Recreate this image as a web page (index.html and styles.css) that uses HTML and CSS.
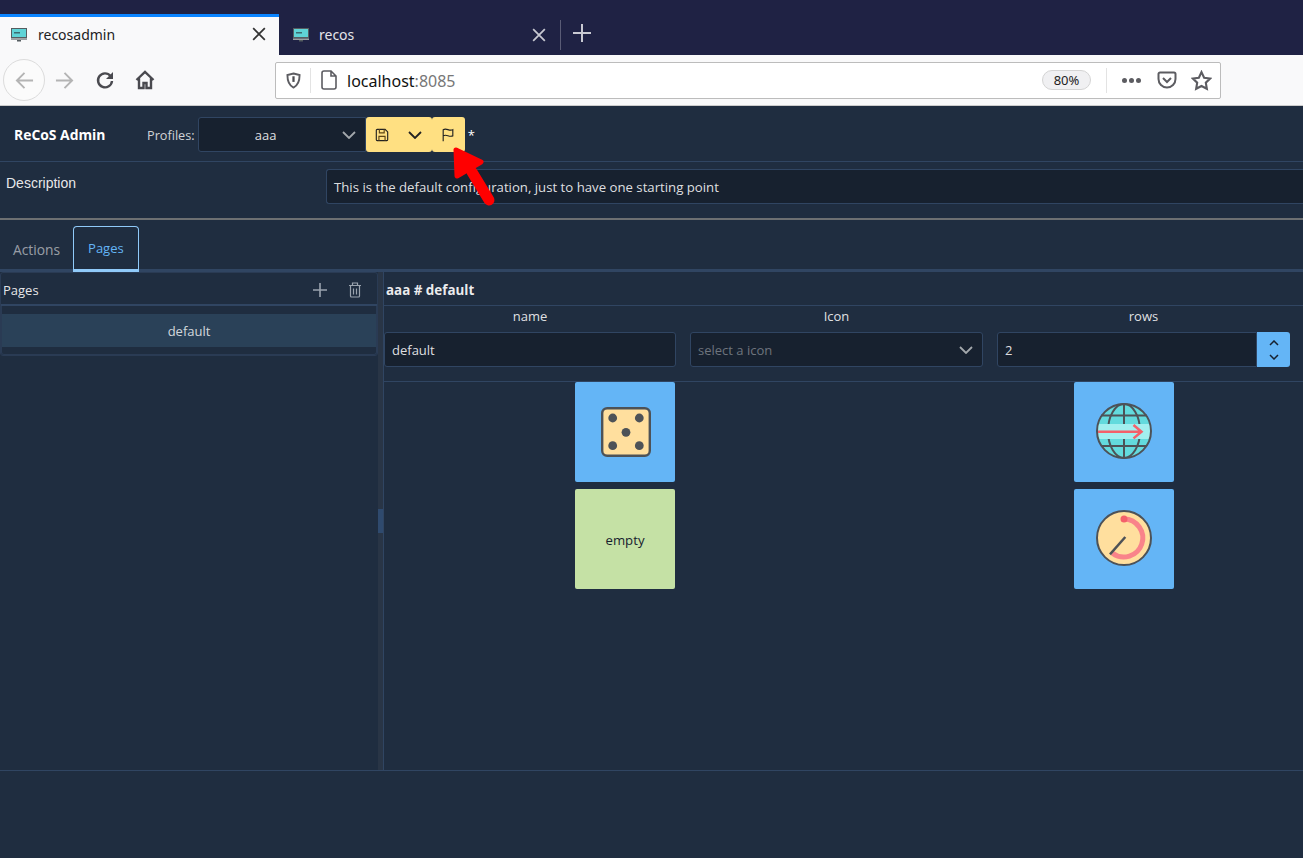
FILE: index.html
```html
<!DOCTYPE html>
<html lang="en">
  <head>
    <meta charset="utf-8">
    <title>recosadmin</title>
    <link rel="stylesheet" href="styles.css">
  </head>
  <body>
    <div class="tabstrip">
      <div class="tab active">
        <svg class="favicon" viewBox="0 0 16 14"><rect x="0" y="0" width="16" height="10.500" fill="#555d60"/><rect x="1" y="1" width="14" height="8" fill="#5fd3d6"/><rect x="3" y="4" width="6" height="1.500" fill="#3b6b70"/><rect x="0" y="10.500" width="16" height="1.500" fill="#9aa0a2"/><rect x="6" y="12" width="4" height="1.500" fill="#555d60"/></svg>
        <span class="tab-title">recosadmin</span>
        <svg class="tab-close" viewBox="0 0 12 12"><path d="M1 1l10 10M11 1L1 11"/></svg>
      </div>
      <div class="tab">
        <svg class="favicon" viewBox="0 0 16 14"><rect x="0" y="0" width="16" height="10.500" fill="#555d60"/><rect x="1" y="1" width="14" height="8" fill="#5fd3d6"/><rect x="3" y="4" width="6" height="1.500" fill="#3b6b70"/><rect x="0" y="10.500" width="16" height="1.500" fill="#9aa0a2"/><rect x="6" y="12" width="4" height="1.500" fill="#555d60"/></svg>
        <span class="tab-title">recos</span>
        <svg class="tab-close" viewBox="0 0 12 12"><path d="M1 1l10 10M11 1L1 11"/></svg>
      </div>
      <div class="tab-sep"></div>
      <svg class="tab-new" viewBox="0 0 18 18"><path d="M9 0v18M0 9h18"/></svg>
    </div>

    <div class="toolbar">
      <div class="nav">
        <div class="nav-back">
          <svg viewBox="0 0 22 20"><path d="M20 10H3M11 2l-8 8 8 8"/></svg>
        </div>
        <svg class="nav-fwd" viewBox="0 0 22 20"><path d="M2 10h17M11 2l8 8-8 8"/></svg>
        <svg class="nav-icon reload" viewBox="0 0 20 20"><path d="M15.500 6A7 7 0 1 0 17 11"/><path class="solid" d="M18 2v7h-7z"/></svg>
        <svg class="nav-icon home" viewBox="0 0 20 20"><path d="M1.500 10L10 2l8.500 8M4 8v10h4.500v-5h3v5H16V8"/></svg>
      </div>
      <div class="urlbar">
        <svg class="shield" viewBox="0 0 16 18"><path d="M8 1.500l6.500 1.700c0 6-1 10.800-6.500 13.300C2.500 14 1.500 9.200 1.500 3.200z"/><path class="solid" d="M6.800 4.500h2.400v6H6.800z"/></svg>
        <div class="url-sep"></div>
        <svg class="pageicon" viewBox="0 0 16 20"><path d="M3 1h7l5 5v11a2 2 0 0 1-2 2H3a2 2 0 0 1-2-2V3a2 2 0 0 1 2-2zM10 1v5h5"/></svg>
        <span class="url-host">localhost<span class="url-port">:8085</span></span>
        <span class="zoom-pill">80%</span>
        <div class="url-sep right"></div>
        <span class="dots"><i></i><i></i><i></i></span>
        <svg class="pocket" viewBox="0 0 20 18"><path d="M3 1.500h14a1.500 1.500 0 0 1 1.500 1.500v5a8.500 8.500 0 0 1-17 0V3A1.500 1.500 0 0 1 3 1.500z"/><path d="M6 7l4 4 4-4"/></svg>
        <svg class="star" viewBox="0 0 20 20"><path d="M10 2l2.500 5.300 5.700.8-4.100 4 1 5.800L10 15.200l-5.100 2.700 1-5.800-4.100-4 5.700-.8z"/></svg>
      </div>
    </div>

    <div class="app">
      <header class="topbar">
        <span class="brand">ReCoS Admin</span>
        <span class="profiles-label">Profiles:</span>
        <div class="select profile-select">
          <span class="select-value">aaa</span>
          <svg class="chevron" viewBox="0 0 14 8"><path d="M1 1l6 6 6-6"/></svg>
        </div>
        <div class="btn-group">
          <button class="btn">
            <svg class="btn-icon save" viewBox="0 0 16 16"><path d="M2.500 1.500h9l3 3v9a1 1 0 0 1-1 1h-11a1 1 0 0 1-1-1v-11a1 1 0 0 1 1-1z"/><path class="orange" d="M5 1.500v4h5.500v-4M4.500 14.500V9.500h7v5"/></svg>
          </button>
          <button class="btn">
            <svg class="btn-icon down" viewBox="0 0 14 8"><path d="M1 1l6 6 6-6"/></svg>
          </button>
          <button class="btn">
            <svg class="btn-icon flag" viewBox="0 0 16 16"><path d="M2.500 15V2c4-2.500 6.500 2 11 0v7c-4.500 2-7-2.500-11 0"/></svg>
          </button>
        </div>
        <span class="dirty">*</span>
      </header>

      <div class="description">
        <label class="desc-label">Description</label>
        <div class="input desc-input">This is the default configuration, just to have one starting point</div>
      </div>

      <nav class="tabs">
        <span class="app-tab">Actions</span>
        <span class="app-tab selected">Pages</span>
      </nav>

      <div class="split">
        <aside class="pages-panel">
          <div class="pages-box">
            <div class="pages-head">
              <span>Pages</span>
              <svg class="head-icon plus" viewBox="0 0 14 14"><path d="M7 0v14M0 7h14"/></svg>
              <svg class="head-icon trash" viewBox="0 0 14 16"><path d="M1 3.500h12M4.500 3.500V1h5v2.500M2.500 3.500v10.500a1 1 0 0 0 1 1h7a1 1 0 0 0 1-1V3.500M5.500 6.500v6M8.500 6.500v6"/></svg>
            </div>
            <div class="pages-list">
              <div class="page-item">default</div>
            </div>
          </div>
        </aside>
        <div class="gutter"><span class="gutter-handle"></span></div>
        <main class="page-detail">
          <div class="detail-title">aaa # default</div>
          <div class="form-grid">
            <div class="field">
              <div class="field-label">name</div>
              <div class="input">default</div>
            </div>
            <div class="field">
              <div class="field-label">Icon</div>
              <div class="select">
                <span class="placeholder">select a icon</span>
                <svg class="chevron" viewBox="0 0 14 8"><path d="M1 1l6 6 6-6"/></svg>
              </div>
            </div>
            <div class="field">
              <div class="field-label">rows</div>
              <div class="spinner">
                <div class="input">2</div>
                <div class="spin-btns">
                  <svg viewBox="0 0 10 6"><path d="M1 5l4-4 4 4"/></svg>
                  <svg viewBox="0 0 10 6"><path d="M1 1l4 4 4-4"/></svg>
                </div>
              </div>
            </div>
          </div>
          <div class="action-grid">
            <div class="action-cell">
              <div class="action blue">
                <svg class="dice-icon" viewBox="0 0 50 50"><rect x="1.200" y="1.200" width="47.600" height="47.600" rx="5" fill="#ffdf9e" stroke="#4d5257" stroke-width="2.400"/><circle cx="11.700" cy="11" r="4.400" fill="#4d5257"/><circle cx="38.300" cy="11" r="4.400" fill="#4d5257"/><circle cx="25" cy="25.300" r="4.400" fill="#4d5257"/><circle cx="11.700" cy="38.700" r="4.400" fill="#4d5257"/><circle cx="38.300" cy="38.700" r="4.400" fill="#4d5257"/></svg>
              </div>
            </div>
            <div class="action-cell">
              <div class="action blue">
                <svg class="action-icon" viewBox="0 0 56 56"><circle cx="28" cy="28" r="27" fill="#63dadd"/><g fill="none" stroke="#4d5257" stroke-width="2"><ellipse cx="28" cy="28" rx="16" ry="27"/><path d="M28 1v54M5 12.500h46M5 43h46"/></g><path d="M2 21h52v15H2z" fill="#a2efef"/><circle cx="28" cy="28" r="27" fill="none" stroke="#4d5257" stroke-width="2"/><path d="M2 28.700h43M37.500 22l8 6.700-8 6.700" fill="none" stroke="#f4606a" stroke-width="2.500"/></svg>
              </div>
            </div>
            <div class="action-cell">
              <div class="action green">empty</div>
            </div>
            <div class="action-cell">
              <div class="action blue">
                <svg class="action-icon" viewBox="0 0 56 56"><circle cx="28" cy="28" r="27" fill="#ffdf9e" stroke="#4d5257" stroke-width="2"/><path d="M28 9a19 19 0 1 1-11.500 34.300" fill="none" stroke="#f9838a" stroke-width="5"/><circle cx="28" cy="9" r="3.500" fill="#f4606a"/><path d="M14 44.300L29.300 27" stroke="#4d5257" stroke-width="2.500"/></svg>
              </div>
            </div>
          </div>
        </main>
      </div>
      <footer class="app-footer"></footer>
    </div>

    <svg class="red-arrow" viewBox="0 0 50 65"><path class="head" d="M6 5l25 12L7 31z"/><path class="shaft" d="M22 27l17 28"/></svg>
  </body>
</html>
```

FILE: styles.css
```css
* {
    box-sizing: border-box;
}
html, body {
    height: 100%;
}
body {
    margin: 0;
    overflow: hidden;
    background-color: #1f2d40;
    font-family: "Open Sans", "Noto Sans", sans-serif;
    font-size: 13px;
    color: rgba(255, 255, 255, .87);
}
svg {
    display: block;
    flex: none;
}

/* browser chrome */
.tabstrip {
    display: flex;
    align-items: flex-start;
    height: 55px;
    padding-top: 14px;
    background-color: #1f2244;
}
.tab {
    display: flex;
    align-items: center;
    width: 279px;
    height: 41px;
    padding: 0 11px 0 14px;
    color: #e4e4ea;
    font-size: 14px;
}
.tab.active {
    padding: 0 12px 4px 11px;
    border-top: 3px solid #0a84ff;
    background-color: #f9f9fa;
    color: #222;
}
.favicon {
    width: 16px;
    height: 14px;
    margin-right: 10px;
}
.tab.active .favicon {
    margin-top: 2px;
    margin-right: 11px;
}
.tab-title {
    flex: 1;
    font-family: "Noto Sans", sans-serif;
}
.tab-close {
    width: 14px;
    height: 14px;
    margin-right: 1px;
    fill: none;
    stroke: #333;
    stroke-width: 1.500;
}
.tab:not(.active) .tab-close {
    stroke: #c8c9d2;
}
.tab-sep {
    width: 1px;
    height: 30px;
    margin: 6px 12px 0 2px;
    background-color: #5a5c76;
}
.tab-new {
    width: 18px;
    height: 18px;
    margin-top: 10px;
    fill: none;
    stroke: #c8c9d2;
    stroke-width: 2;
}

.toolbar {
    display: flex;
    align-items: center;
    height: 51px;
    background-color: #f9f9fa;
    border-bottom: 1px solid #ccc;
}
.nav {
    display: flex;
    align-items: center;
    width: 275px;
    padding-left: 3px;
}
.nav-back {
    display: flex;
    align-items: center;
    justify-content: center;
    width: 42px;
    height: 42px;
    border: 1px solid #dcdcdc;
    border-radius: 50%;
    background-color: #fbfbfb;
}
.nav-back svg {
    width: 21px;
    height: 19px;
    fill: none;
    stroke: #b4b4b4;
    stroke-width: 2;
}
.nav-fwd {
    width: 21px;
    height: 19px;
    margin-left: 9px;
    fill: none;
    stroke: #b4b4b4;
    stroke-width: 2;
}
.nav-icon {
    width: 20px;
    height: 20px;
    fill: none;
    stroke: #4a4a4f;
    stroke-width: 2.400;
}
.reload {
    margin-left: 20px;
}
.home {
    margin-left: 20px;
}
.solid {
    fill: #4a4a4f;
    stroke: none;
}
.urlbar {
    display: flex;
    align-items: center;
    width: 946px;
    height: 37px;
    padding: 0 8px 0 10px;
    background-color: #fff;
    border: 1px solid #bcbcbc;
    border-radius: 2px;
}
.shield {
    width: 15px;
    height: 17px;
    fill: none;
    stroke: #5c5c61;
    stroke-width: 2;
}
.url-sep {
    width: 1px;
    height: 25px;
    margin: 0 10px 0 9px;
    background-color: #e3e3e3;
}
.pageicon {
    width: 16px;
    height: 20px;
    margin-right: 10px;
    fill: none;
    stroke: #5c5c61;
    stroke-width: 1.600;
}
.url-host {
    flex: 1;
    padding-top: 2px;
    font-family: "Noto Sans", sans-serif;
    font-size: 16px;
    color: #111;
}
.url-port {
    color: #777;
}
.zoom-pill {
    width: 49px;
    height: 20px;
    border: 1px solid #d4d4d4;
    border-radius: 10px;
    background-color: #f0f0f2;
    color: #222;
    text-align: center;
    line-height: 19px;
    font-size: 13px;
    font-family: "Noto Sans", sans-serif;
}
.url-sep.right {
    margin: 0 15px 0 15px;
}
.dots {
    display: flex;
    gap: 2px;
    width: 20px;
}
.dots i {
    width: 5px;
    height: 5px;
    border-radius: 50%;
    background-color: #5c5c61;
}
.pocket {
    width: 20px;
    height: 18px;
    margin-left: 15px;
    fill: none;
    stroke: #5c5c61;
    stroke-width: 2;
}
.star {
    width: 21px;
    height: 21px;
    margin-left: 14px;
    fill: none;
    stroke: #5c5c61;
    stroke-width: 2;
}

/* app */
.app {
    display: flex;
    flex-direction: column;
    height: 752px;
    background-color: #1f2d40;
}
.topbar {
    display: flex;
    align-items: center;
    height: 56px;
    padding: 2px 0 0 14px;
    border-bottom: 1px solid #304562;
}
.brand {
    width: 133px;
    font-size: 13.900px;
    font-weight: 700;
    color: #fff;
}
.profiles-label {
    margin-right: 3px;
    font-size: 12.700px;
    color: rgba(255, 255, 255, .8);
}
.select {
    display: flex;
    align-items: center;
    height: 35px;
    padding: 0 7px;
    background-color: #17212f;
    border: 1px solid #304562;
    border-radius: 3px;
}
.profile-select {
    width: 168px;
    border-radius: 3px 0 0 3px;
}
.select-value {
    flex: 1;
    padding-right: 16px;
    text-align: center;
}
.chevron {
    width: 14px;
    height: 8px;
    margin-left: auto;
    margin-right: 2px;
    fill: none;
    stroke: #a3a8ac;
    stroke-width: 1.800;
}
.btn-group {
    display: flex;
}
.btn {
    display: flex;
    align-items: center;
    justify-content: center;
    width: 33px;
    height: 35px;
    padding: 0;
    border: 0;
    background-color: #ffe082;
}
.btn:nth-child(1) {
    border-radius: 3px 0 0 3px;
}
.btn:nth-child(2) {
    border-radius: 0 3px 3px 0;
}
.btn:nth-child(3) {
    border-radius: 3px;
}
.btn-icon {
    width: 14px;
    height: 14px;
    fill: none;
    stroke: #222;
    stroke-width: 1.300;
}
.btn-icon.down {
    height: 8px;
    stroke-width: 1.800;
}
.orange {
    stroke: #5d4415;
}
.dirty {
    margin-left: 3px;
    color: #fff;
}
.description {
    display: flex;
    height: 58px;
    padding: 7px 0 0 6px;
    border-bottom: 2px solid #6d7072;
}
.desc-label {
    width: 320px;
    margin-top: 6px;
    font-family: "Liberation Sans", sans-serif;
    font-size: 14px;
    color: rgba(255, 255, 255, .9);
}
.input {
    display: flex;
    align-items: center;
    height: 35px;
    padding: 0 7px;
    background-color: #17212f;
    border: 1px solid #304562;
    border-radius: 3px;
    color: rgba(255, 255, 255, .87);
}
.desc-input {
    flex: 1;
    border-right: 0;
    border-radius: 3px 0 0 3px;
    font-size: 13.200px;
}
.tabs {
    display: flex;
    height: 52px;
    padding: 6px 0 0 0;
    border-bottom: 3px solid #304562;
}
.app-tab {
    display: flex;
    align-items: center;
    height: 46px;
    padding: 0 13px;
    font-size: 13.800px;
    color: rgba(255, 255, 255, .55);
}
.app-tab.selected {
    padding: 0 14px;
    border: 1px solid #90caf9;
    border-bottom: 3px solid #90caf9;
    border-radius: 4px 4px 0 0;
    font-size: 13px;
    color: #64b5f6;
}
.split {
    display: flex;
    height: 499px;
    border-bottom: 1px solid #304562;
}
.pages-panel {
    flex: none;
    width: 378px;
}
.pages-box {
    border: 1px solid #2a3b54;
    border-radius: 3px;
}
.pages-head {
    display: flex;
    align-items: center;
    height: 33px;
    padding: 2px 0 0 2px;
    border-bottom: 2px solid #304562;
    color: rgba(255, 255, 255, .9);
}
.pages-head span {
    flex: 1;
}
.head-icon {
    fill: none;
    stroke: #9aa3ae;
}
.plus {
    width: 14px;
    height: 14px;
    stroke-width: 1.600;
}
.trash {
    width: 14px;
    height: 16px;
    margin: 0 15px 0 21px;
    stroke-width: 1.200;
}
.pages-list {
    height: 49px;
    padding-top: 8px;
    border: solid #2a3b54;
    border-width: 0 1px 1px;
    border-radius: 0 0 3px 3px;
}
.page-item {
    display: flex;
    align-items: center;
    justify-content: center;
    height: 33px;
    background-color: #2a4158;
    color: rgba(255, 255, 255, .8);
}
.gutter {
    display: flex;
    flex: none;
    align-items: center;
    width: 5px;
    background-color: #293546;
}
.gutter-handle {
    width: 5px;
    height: 24px;
    background-color: #2f4a6e;
}
.page-detail {
    flex: 1;
    min-width: 0;
    border-left: 1px solid #304562;
}
.detail-title {
    display: flex;
    align-items: center;
    height: 34px;
    padding: 2px 0 0 2px;
    border-bottom: 1px solid #304562;
    font-size: 13.400px;
    font-weight: 700;
    color: rgba(255, 255, 255, .92);
}
.form-grid {
    display: grid;
    grid-template-columns: 292px 293px 293px;
    column-gap: 14px;
    height: 76px;
    border-bottom: 1px solid #304562;
}
.field-label {
    height: 26px;
    padding-top: 1px;
    text-align: center;
}
.placeholder {
    color: rgba(255, 255, 255, .38);
}
.spinner {
    display: flex;
}
.spinner .input {
    flex: 1;
    border-radius: 3px 0 0 3px;
}
.spin-btns {
    display: flex;
    flex-direction: column;
    align-items: center;
    justify-content: center;
    gap: 8px;
    width: 33px;
    height: 35px;
    background-color: #64b5f6;
    border-radius: 0 3px 3px 0;
}
.spin-btns svg {
    width: 10px;
    height: 6px;
    fill: none;
    stroke: #17212f;
    stroke-width: 1.500;
}
.action-grid {
    display: grid;
    grid-template-columns: 482px 1fr;
    grid-auto-rows: 100px;
    row-gap: 7px;
}
.action-cell {
    display: flex;
    justify-content: center;
}
.action-cell:nth-child(even) {
    justify-content: flex-start;
    padding-left: 208px;
}
.action {
    display: flex;
    align-items: center;
    justify-content: center;
    width: 100px;
    height: 100px;
    border-radius: 2px;
}
.action.blue {
    background-color: #64b5f6;
}
.action.green {
    padding-top: 2px;
    background-color: #c5e1a5;
    color: #17212f;
    font-size: 13.200px;
}
.dice-icon {
    width: 50px;
    height: 50px;
    margin-left: 2px;
}
.action-icon {
    width: 56px;
    height: 56px;
    margin-top: -3px;
}
.app-footer {
    flex: 1;
}

/* annotation drawn on top of the screenshot */
.red-arrow {
    position: absolute;
    left: 450px;
    top: 145px;
    width: 50px;
    height: 65px;
}
.red-arrow .head {
    fill: #f00;
    stroke: #f00;
    stroke-width: 5;
    stroke-linejoin: round;
}
.red-arrow .shaft {
    fill: none;
    stroke: #f00;
    stroke-width: 11;
    stroke-linecap: round;
}
```
